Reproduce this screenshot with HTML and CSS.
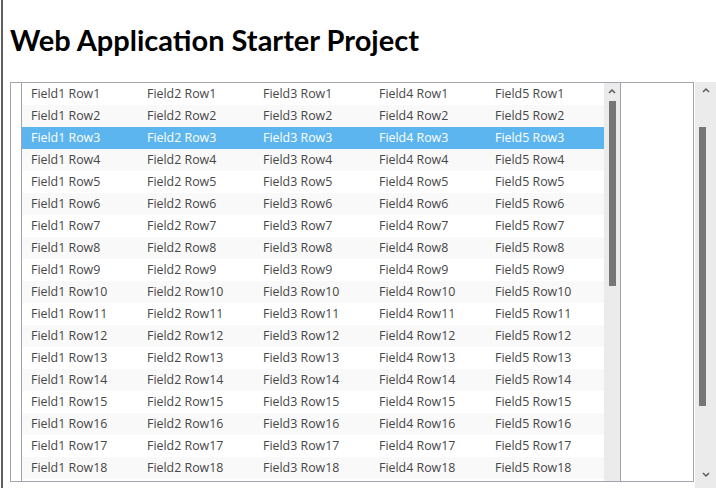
FILE: index.html
```html
<!DOCTYPE html>
<html lang="en">
<head>
    <meta charset="UTF-8">
    <meta name="viewport" content="width=device-width, initial-scale=1.0">
    <link rel="stylesheet" href="styles.css">
    <title>Web Application Starter Project</title>
</head>
<body>

<div class="page">
    <h1>Web Application Starter Project</h1>

    <div class="workspace">
        <div class="grid-box">
            <div class="gutter"></div>
            <div id="rows" class="rows"></div>
            <div class="vscroll">
                <div class="arrow">
                    <svg width="8" height="6" viewBox="0 0 8 6"><polyline points="1,5 4,2 7,5" /></svg>
                </div>
                <div class="thumb"></div>
            </div>
            <div class="filler"></div>
        </div>

        <div class="page-scroll">
            <div class="arrow">
                <svg width="8" height="6" viewBox="0 0 8 6"><polyline points="1,5 4,2 7,5" /></svg>
            </div>
            <div class="thumb"></div>
            <div class="arrow down">
                <svg width="8" height="6" viewBox="0 0 8 6"><polyline points="1,1 4,4 7,1" /></svg>
            </div>
        </div>
    </div>
</div>

<script>
    document.addEventListener("DOMContentLoaded", function () {
        const rows = document.getElementById("rows");

        for (let r = 1; r <= 18; r++) {
            const row = document.createElement("div");
            row.className = "row";
            if (r % 2 === 0) row.classList.add("alt");
            if (r === 3) row.classList.add("selected");

            for (let f = 1; f <= 5; f++) {
                const cell = document.createElement("div");
                cell.className = "cell";
                cell.textContent = "Field" + f + " Row" + r;
                row.appendChild(cell);
            }
            rows.appendChild(row);
        }
    });
</script>

</body>
</html>
```

FILE: styles.css
```css
body {
    margin: 0;
    padding-left: 1px;
    background-color: #fff;
    font-family: 'Open Sans', sans-serif;
}

.page {
    height: 488px;
    border-left: 2px solid #5f5f5f;
    padding-left: 7px;
    box-sizing: border-box;
    overflow: hidden;
}

h1 {
    margin: 0;
    height: 82px;
    padding-top: 22px;
    box-sizing: border-box;
    font-family: 'Lato', sans-serif;
    font-size: 29px;
    font-weight: 700;
    line-height: 36px;
    color: #000;
}

.workspace {
    display: flex;
    height: 406px;
}

.grid-box {
    display: flex;
    width: 684px;
    height: 400px;
    border: 1px solid #a4a4ae;
    box-sizing: border-box;
}

.gutter {
    width: 10px;
    border-right: 1px solid #a4a4ae;
}

.rows {
    width: 582px;
    overflow: hidden;
}

.row {
    display: grid;
    grid-template-columns: repeat(5, 116px);
    height: 22px;
    line-height: 22px;
    font-size: 12.4px;
    color: #474747;
    background-color: #fff;
}

.row.alt {
    background-color: #f9f9f9;
}

.row.selected {
    background-color: #5cb5ef; /* selection blue */
    color: #fff;
}

.cell {
    padding-left: 9px;
    white-space: nowrap;
}

/* scrollbars */
.vscroll {
    display: flex;
    flex-direction: column;
    width: 16px;
    background-color: #ebebeb;
    border-right: 1px solid #a4a4ae;
}

.vscroll .thumb {
    width: 7px;
    height: 185px;
    margin: 2px 0 0 5px;
    background-color: #767676;
}

.filler {
    flex: 1;
}

.page-scroll {
    display: flex;
    flex-direction: column;
    width: 21px;
    margin-left: 1px;
    background-color: #ebebeb;
}

.page-scroll .thumb {
    width: 7px;
    height: 279px;
    margin: 29px 0 0 4px;
    background-color: #767676;
}

.arrow {
    display: flex;
    align-items: center;
    justify-content: center;
    height: 16px;
}

.arrow.down {
    margin-top: auto;
    margin-bottom: 5px;
}

.arrow svg polyline {
    fill: none;
    stroke: #5c5c5c;
    stroke-width: 1.5;
}
```
